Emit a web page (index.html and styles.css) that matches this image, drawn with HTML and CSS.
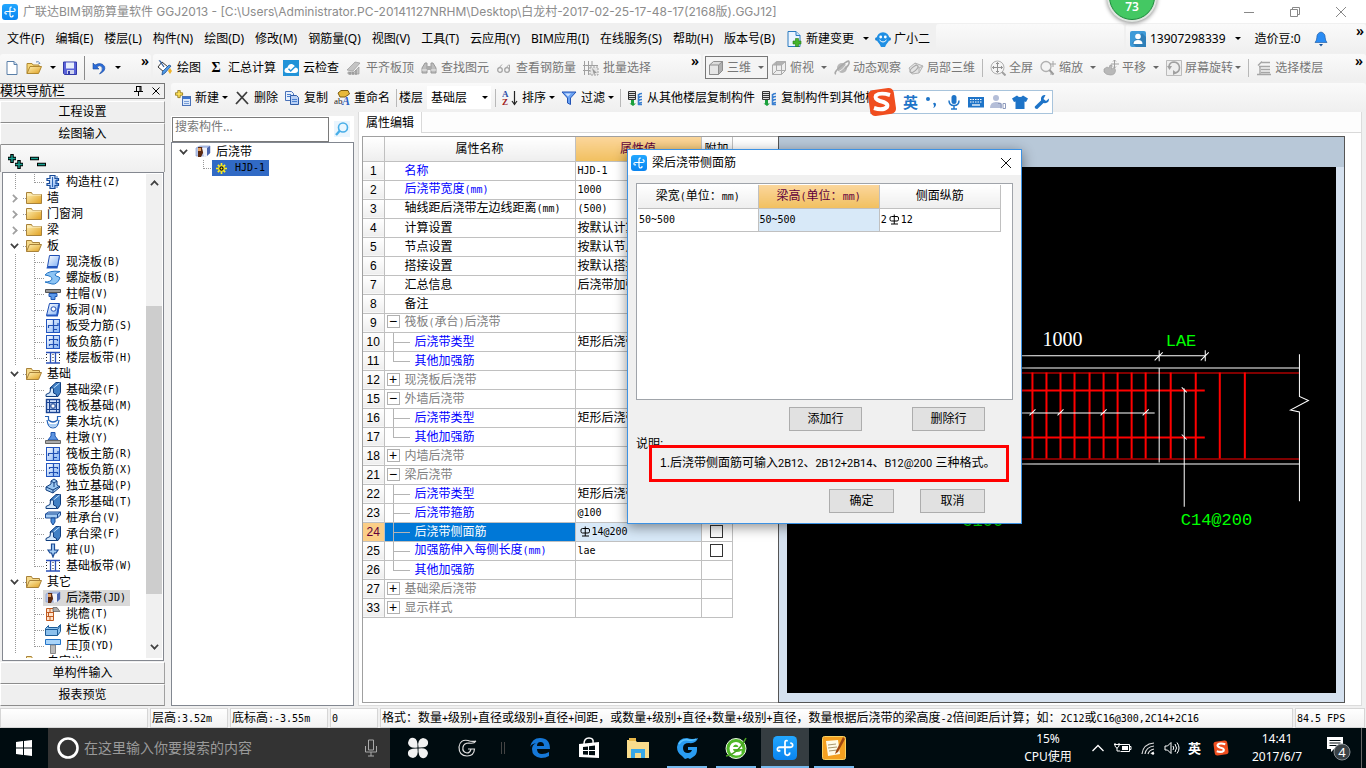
FILE: index.html
```html
<!DOCTYPE html>
<html lang="zh-CN">
<head>
<meta charset="utf-8">
<title>广联达BIM钢筋算量软件 GGJ2013</title>
<link rel="stylesheet" href="styles.css">
</head>
<body>
<svg class="sprite" aria-hidden="true">
<defs>
<linearGradient id="gFold" x1="0" y1="0" x2="1" y2="1"><stop offset="0" stop-color="#fff2b8"/><stop offset="1" stop-color="#e0a020"/></linearGradient>
<linearGradient id="gBlue" x1="0" y1="0" x2="1" y2="1"><stop offset="0" stop-color="#fff"/><stop offset="1" stop-color="#7fb0f5"/></linearGradient>
<linearGradient id="gApp" x1="0" y1="0" x2="0" y2="1"><stop offset="0" stop-color="#22a7ff"/><stop offset="1" stop-color="#0a84f0"/></linearGradient>
</defs>
<symbol id="app" viewBox="0 0 16 16"><rect width="16" height="16" rx="3" fill="url(#gApp)"/><path d="M9.800 3.200Q8 2.600 8 4.500v6.500q0 2 2 1.800 1.300-.3 1-1.800M3 9.500Q2.600 7.500 4.500 7.500h7q2 0 1.500-2M3 9.500q.8 1 1.800 0M11.500 5q.8-.6 1.500.5" fill="none" stroke="#fff" stroke-width="1.200"/></symbol>
<symbol id="doc" viewBox="0 0 16 16"><path d="M3 1.500h7l3 3v10H3z" fill="#fff" stroke="#5a7fa8"/><path d="M10 1.500v3h3" fill="#cfe0f5" stroke="#5a7fa8"/></symbol>
<symbol id="open" viewBox="0 0 16 16"><path d="M1 13.500V3.500h5l1 1.500h6v2" fill="#f7d777" stroke="#b08830"/><path d="M1 13.500l3-7h11.500l-3 7z" fill="url(#gFold)" stroke="#b08830"/><path d="M10 2q3-1.500 4 1.500l-1.500 0" fill="none" stroke="#6a8db8"/></symbol>
<symbol id="save" viewBox="0 0 16 16"><path d="M1.500 2h13v12.500h-12l-1-1z" fill="#5b63d8" stroke="#323aa8"/><rect x="4" y="2.500" width="8" height="6" fill="#e8eefb"/><rect x="5" y="10" width="7" height="4" fill="#cfd4ee"/><rect x="6" y="11" width="2" height="3" fill="#323aa8"/></symbol>
<symbol id="undo" viewBox="0 0 16 16"><path d="M2 3v6h6L5.800 6.800Q9 4.500 11 7q1.500 3-2.500 7Q15 11 13.600 6.500 10.500 1.500 4 5z" fill="#2b6bd8" stroke="#174aa0" stroke-width=".6"/></symbol>
<symbol id="paint" viewBox="0 0 16 16"><path d="M5 2l6 5-4 5-6-5z" fill="#fff" stroke="#333"/><path d="M2 1q1-1 3 3l2 3" fill="none" stroke="#345f9c" stroke-width="1.300"/><path d="M14 6l-6 7-3 2 .5-3.500L12 5z" fill="#4f9be8" stroke="#1d4f93" stroke-width=".8"/><path d="M13 8l2 3-2 3-2-3z" fill="#f0b429"/></symbol>
<symbol id="cloud" viewBox="0 0 16 16"><rect y="0" width="16" height="16" fill="#2193d8"/><path d="M4.500 13Q1 13 1.500 10 2 7.500 4.500 7.500 5.500 3.500 9 4q2.800.5 3.200 3.500 2.800 0 2.800 2.700T12 13z" fill="#fff"/><path d="M5.500 8.800l2.200 2.200L12 6.800" fill="none" stroke="#2193d8" stroke-width="1.500"/></symbol>
<symbol id="gslab" viewBox="0 0 16 16"><path d="M1 10l8-8 5 1-7 8zM2 12h6l5-5v7H2z" fill="#c4c4c4" stroke="#9a9a9a" stroke-width=".7"/><path d="M4 12v3M7 12v3M10 10v5" stroke="#888"/></symbol>
<symbol id="gbino" viewBox="0 0 16 16"><path d="M1 13V8l3-5h2v10zM15 13V8l-3-5h-2v10z" fill="#bdbdbd" stroke="#999"/><rect x="6" y="6" width="4" height="4" fill="#aaa"/><path d="M1 10h5M10 10h5" stroke="#eee"/></symbol>
<symbol id="gglass" viewBox="0 0 16 16"><circle cx="4" cy="10" r="2.300" fill="none" stroke="#a5a5a5" stroke-width="1.300"/><circle cx="11" cy="10" r="2.300" fill="none" stroke="#a5a5a5" stroke-width="1.300"/><path d="M2 9l4-4.500M9 9l4-4.500M13.500 11V5" stroke="#a5a5a5"/></symbol>
<symbol id="gbatch" viewBox="0 0 16 16"><path d="M1.500 1v14M5.500 1v14M0 5.500h15M0 10.500h8M9 1v5" stroke="#a0a0a0" fill="none"/><path d="M7 7h8v8H7z" fill="#e4e4e4" stroke="#a0a0a0" stroke-dasharray="2 1"/><path d="M9 8l5 5-2 0-1 2z" fill="#999"/></symbol>
<symbol id="gcube" viewBox="0 0 16 16"><path d="M1.500 5l4-3.500h9v9l-4 4h-9z" fill="#dcdcdc" stroke="#8e8e8e"/><path d="M10.500 5l4-3.500v9l-4 4z" fill="#b0b0b0" stroke="#8e8e8e"/><path d="M1.500 5h9v9.500h-9z" fill="#e6e6e6" stroke="#8e8e8e"/></symbol>
<symbol id="gcube2" viewBox="0 0 16 16"><path d="M1.500 5l4-3.500h9v9l-4 4h-9z" fill="#eee" stroke="#aaa"/><path d="M1.500 5l4-3.500h9L10.500 5z" fill="#b2b2b2"/><path d="M1.500 5h9v9.500M5.500 2v8.500h9M5.500 10.500l-4 4M10.500 5l4-3.500" fill="none" stroke="#aaa"/></symbol>
<symbol id="gorbit" viewBox="0 0 16 16"><circle cx="8" cy="8" r="5" fill="#b8b8b8"/><path d="M2 14Q-1 13 7 6t8-4q1 2-4 7" fill="none" stroke="#a8a8a8" stroke-width="1.600"/><path d="M4 12q5-2 8-7" stroke="#eee" fill="none"/></symbol>
<symbol id="glocal" viewBox="0 0 16 16"><path d="M1 8l6-5 8 3-4 7-7 1z" fill="#e4e4e4" stroke="#b4b4b4"/><ellipse cx="6" cy="9" rx="2" ry="5" transform="rotate(50 6 9)" fill="none" stroke="#a4a4a4"/><path d="M7 3l4 5v5M11 8l4-2" stroke="#b4b4b4" fill="none"/></symbol>
<symbol id="gfull" viewBox="0 0 16 16"><circle cx="7.500" cy="7.500" r="6.500" fill="#f4f4f4" stroke="#b0b0b0"/><path d="M7.500 2.500v10M2.500 7.500h10M6 4l1.500-1.500L9 4M6 11l1.500 1.500L9 11M4 6L2.500 7.500 4 9M11 6l1.500 1.500L11 9" stroke="#909090" fill="none"/><path d="M12 12l3.500 3.500" stroke="#a0a0a0" stroke-width="2"/></symbol>
<symbol id="gzoom" viewBox="0 0 16 16"><circle cx="6" cy="6.500" r="5" fill="#f4f4f4" stroke="#b0b0b0" stroke-width="1.300"/><path d="M9.500 10l4 4.500" stroke="#9a9a9a" stroke-width="2"/><path d="M13 1v6M10 4h6M10 14h4" stroke="#a6a6a6"/></symbol>
<symbol id="ghand" viewBox="0 0 16 16"><path d="M1 9l3-2 2 1 1-3h2l-.5 4 3-1 1 2q0 5-5 5Q3 15 1 12z" fill="#b8b8b8" stroke="#999" stroke-width=".6"/><path d="M11.500 0v8M8 4h8M10 1.500L11.500 0 13 1.500M10 6.500L11.500 8 13 6.500" stroke="#a0a0a0" fill="none"/></symbol>
<symbol id="grot" viewBox="0 0 16 16"><path d="M.5.5h15v15H.5z" fill="#eee" stroke="#bbb"/><path d="M3 6q1-4 5-4 5 .5 5.500 5.500Q13.500 12 9 13" fill="none" stroke="#a0a0a0" stroke-width="1.600"/><path d="M1 6h5l-2.500 4zM7 10v5l4-2" fill="#a0a0a0"/></symbol>
<symbol id="gfloor" viewBox="0 0 16 16"><path d="M2 5.500L6 1.500M5 2.500h9M3 6.500h11M5 9.500h9M5 12.500h9M1 14.500h14M4 6v8" fill="none" stroke="#a6a6a6" stroke-width="1.400"/></symbol>
<symbol id="new" viewBox="0 0 16 16"><path d="M3.500.5h3v3h3v3h-3v3h-3v-3h-3v-3h3z" fill="#ffe25a" stroke="#8a7010" transform="scale(.8)"/><rect x="7.500" y="6.500" width="8" height="9" fill="#dbe8fa" stroke="#4a72b8"/><path d="M8 8h7" stroke="#3c74d0" stroke-width="2"/><path d="M9 11.500h5M9 13.500h5" stroke="#7a9fd8"/></symbol>
<symbol id="del" viewBox="0 0 16 16"><path d="M3 2l11 12M13 2L2 14" stroke="#3c3c3c" stroke-width="1.800"/></symbol>
<symbol id="copy" viewBox="0 0 16 16"><path d="M1.500 1.500h6l2 2v7h-8z" fill="#e6effc" stroke="#4a72b8"/><path d="M6.500 5.500h6l2 2v7h-8z" fill="#b9d0f4" stroke="#2f5ca8"/><path d="M3 4.500h4M3 6.500h3M8 9.500h5M8 11.500h5" stroke="#4a80d0"/></symbol>
<symbol id="ren" viewBox="0 0 16 16"><path d="M4 3l3-2.500h7L15.500 4 11 7H6z" fill="#e8b93a" stroke="#7c5c10"/><text x="0" y="14" font-size="9" font-family="Liberation Serif" fill="#222">ab</text><text x="8" y="15" font-size="12" font-style="italic" font-weight="bold" font-family="Liberation Serif" fill="#2c5fc0">A</text></symbol>
<symbol id="sort" viewBox="0 0 16 16"><text x="0" y="7" font-size="9" font-weight="bold" font-family="Liberation Serif" fill="#2c4fa8">A</text><text x="0" y="15" font-size="9" font-weight="bold" font-family="Liberation Serif" fill="#a02020">Z</text><path d="M12.500 1v13M10 11l2.500 3.500L15 11" fill="none" stroke="#222" stroke-width="1.200"/></symbol>
<symbol id="filter" viewBox="0 0 16 16"><path d="M1 2h14L9.500 8v6.500l-3-1.500V8z" fill="#6aa2f4" stroke="#2353b4"/><path d="M4 3.500h6l-3 3z" fill="#cfe2ff"/></symbol>
<symbol id="fcopy" viewBox="0 0 16 16"><path d="M1.500 1.500h7v8h-7z" fill="#ddd" stroke="#333"/><path d="M2 3.500h6M2 5.500h6M2 7.500h6M8.500 2v7" stroke="#333"/><path d="M15 3.500q-3 0-3 1.500M15 6.500q-3 0-3 1.500M15 9.500q-3 0-3 1.500M15 12.500q-3 0-3 2h3M11.500 4v11" fill="none" stroke="#3a7fd0" stroke-width="1.600"/><path d="M4 10v3.500H2.500L6 16l3-2.500H7V10z" fill="#1ba03c"/></symbol>
<symbol id="chg" viewBox="0 0 16 16"><path d="M2 .5h8l4 4v11H2z" fill="#eaf4ff" stroke="#2a7ac0"/><path d="M10 .5v4h4" fill="#cbe2f8" stroke="#2a7ac0"/><path d="M9.500 7.500h3v2.500H15v3h-2.500v2.500h-3V13H7v-3h2.500z" fill="#45b52c" stroke="#257816" stroke-width=".6"/></symbol>
<symbol id="robot" viewBox="0 0 16 16"><circle cx="1.800" cy="8" r="1.800" fill="#1b7fd0"/><circle cx="14.200" cy="8" r="1.800" fill="#1b7fd0"/><circle cx="8" cy="7.500" r="6.300" fill="#1f8fe4"/><path d="M4 12h8l-2 4H6z" fill="#1f8fe4"/><circle cx="5.700" cy="6" r="1.400" fill="#fff"/><circle cx="10.300" cy="6" r="1.400" fill="#fff"/><path d="M4.500 9q3.500 4 7 0" stroke="#fff" fill="none"/></symbol>
<symbol id="user" viewBox="0 0 16 16"><rect width="16" height="16" rx="2" fill="#3f9bd8"/><path d="M2 12L12 2l4 4v10H6z" fill="#2f7fb8"/><circle cx="8" cy="5.500" r="2.800" fill="#fff"/><path d="M3.500 13q0-4 4.500-4t4.500 4z" fill="#fff"/></symbol>
<symbol id="bell" viewBox="0 0 16 16"><path d="M8 1q4.200 1 4.200 5.500 0 3 1.800 5H2q1.800-2 1.800-5Q3.800 2 8 1z" fill="#2a8cf4" stroke="#14529c" stroke-width=".6"/><path d="M6 13h4l-2 2.500z" fill="#14529c"/></symbol>
<symbol id="mag" viewBox="0 0 16 16"><rect width="16" height="16" fill="#eaf5fd"/><circle cx="9" cy="6.500" r="4.500" fill="#e8f6ff" stroke="#48aee8" stroke-width="1.600"/><path d="M5.800 9.800L2 14" stroke="#48aee8" stroke-width="2.400"/></symbol>
<symbol id="dir" viewBox="0 0 16 16"><path d="M.5 13.500v-11h5l1 2h9v9z" fill="url(#gFold)" stroke="#a8823a"/><path d="M1 5h14" stroke="#fff4cc"/></symbol>
<symbol id="dirO" viewBox="0 0 16 16"><path d="M.5 13.500v-11h5l1 2h7v2" fill="#f5d98a" stroke="#a8823a"/><path d="M.5 13.500l3-7h12l-3 7z" fill="url(#gFold)" stroke="#a8823a"/></symbol>
<symbol id="t-hjd" viewBox="0 0 16 16"><path d="M1 4l4-2h10v7l-4 3H1z" fill="#b8c8ec" stroke="#7a90c8" stroke-width=".6"/><path d="M3 3h4l2 4-3 6H3z" fill="#5c2a12"/><path d="M7 4h5v8l-3 1-1-5z" fill="#f0f2fa"/><path d="M12 4l3-2v7l-3 3z" fill="#4a66b0"/><path d="M3 4h3v3H3z" fill="#e6a060"/></symbol>
<symbol id="gear" viewBox="0 0 12 12"><path d="M6 0v12M0 6h12M2 2l8 8M10 2l-8 8" stroke="#ffee20" stroke-width="1.800"/><circle cx="6" cy="6" r="3" fill="#111" stroke="#ffee20" stroke-width="1.200"/><circle cx="6" cy="6" r="1" fill="#ffee20"/></symbol>
<symbol id="t-gz" viewBox="0 0 16 16"><path d="M5 1.500h5v3h3.500v2H11v3h2.500v2H10v3H5v-3H2v-2h2.500v-3H2v-2h3z" fill="url(#gBlue)" stroke="#174a98" stroke-width="1.200"/><path d="M12 2v12M7.500 3v10" stroke="#2b66b8"/></symbol>
<symbol id="t-slab" viewBox="0 0 16 16"><path d="M4.500 1.500h10l-2 11h-10z" fill="url(#gBlue)" stroke="#1f4fb4"/><path d="M2 12.500h10.500l2-11v3l-2 10H1.500z" fill="#2356c0"/></symbol>
<symbol id="t-spiral" viewBox="0 0 16 16"><path d="M0 5Q4 0 15 1.500 8 4 11 6q4 1 4 2-3 7-8 6L0 12q6 0 7-3Q7 6 0 5z" fill="#8cc4f4" stroke="#2474c4"/></symbol>
<symbol id="t-cap" viewBox="0 0 16 16"><path d="M.5 3.500h15v3H.5z" fill="#999" stroke="#555"/><path d="M4 7.500h8v3h-2v3H6v-3H4z" fill="#5c9aec" stroke="#1f56b0"/></symbol>
<symbol id="t-hole" viewBox="0 0 16 16"><path d="M4.500 1.500h10l-2 12h-11z" fill="url(#gBlue)" stroke="#1f4fb4"/><ellipse cx="8.500" cy="7" rx="2.500" ry="2.200" fill="#fff" stroke="#1f4fb4"/><path d="M1.500 13.500H12l2-11" fill="none" stroke="#2356c0" stroke-width="1.800"/></symbol>
<symbol id="t-rs" viewBox="0 0 16 16"><rect x="1.500" y="1.500" width="13" height="13" fill="url(#gBlue)" stroke="#2356c0"/><path d="M8.500 2v12M3.500 7v3M3.500 7.500H13V5M8.500 11.500H12" fill="none" stroke="#1f4fb4" stroke-width="1.200"/></symbol>
<symbol id="t-rf" viewBox="0 0 16 16"><rect x="1.500" y="1.500" width="13" height="13" fill="url(#gBlue)" stroke="#2356c0"/><path d="M8.500 2v12M4 5.500h9M4 10.500h9M4.500 5v2M12.500 5v2M4.500 10v2M12.500 10v2" fill="none" stroke="#1f4fb4" stroke-width="1.200"/></symbol>
<symbol id="t-strip" viewBox="0 0 16 16"><path d="M1 2.500h14M1 13h14M5.500 3v10M10.500 3v10" stroke="#2a50b8" stroke-width="1.300"/><path d="M1.500 4v8M8 4v8M14.500 4v8" stroke="#222" stroke-dasharray="1 2"/></symbol>
<symbol id="t-beam" viewBox="0 0 16 16"><path d="M5 6l6-5.500h4.500v10L13 14.500H9z" fill="#3f7fc4" stroke="#0f3c7c"/><path d="M5.500 6h3v5l3 1.500v2H1v-2l4-2z" fill="#d4e8fc" stroke="#0f3c7c"/><path d="M8.500 6l6-5" stroke="#bfe0ff"/></symbol>
<symbol id="t-raft" viewBox="0 0 16 16"><rect x="1.500" y="1.500" width="13" height="13" fill="#cfe0fa" stroke="#1a4494" stroke-width="1.400"/><path d="M4.500 1v14M11.500 1v14M1 4.500h14M1 11.500h14M8 4v8M4 8h8" stroke="#1a4494"/><rect x="6" y="6" width="4" height="4" fill="#fff" stroke="#1a4494"/></symbol>
<symbol id="t-pit" viewBox="0 0 16 16"><path d="M0 2.500h3.500V6q4.500 4 9 0V2.500H16M2 6q1 8 6 8t6-8" fill="none" stroke="#2563b8" stroke-width="1.200"/><path d="M3 8q1 5 5 5t5-5l-2 2H5z" fill="#a8cdf4"/></symbol>
<symbol id="t-pier" viewBox="0 0 16 16"><path d="M6 2.500h4V6l3 4H3l3-4z" fill="#5c94e0" stroke="#1f56b0"/><path d="M.5 10.500h15v3H.5z" fill="#aaa" stroke="#666"/></symbol>
<symbol id="t-iso" viewBox="0 0 16 16"><path d="M1 9l5-3V3l3-2 3 2v4l3 2-7 6-7-3z" fill="#9cc8f0" stroke="#123f80"/><path d="M6 3l3 2 3-2M9 5v4M1 9l7 3 7-4M8 12v3" fill="none" stroke="#123f80"/></symbol>
<symbol id="t-pc" viewBox="0 0 16 16"><path d="M.5 4l3-2h12v3l-3 3H.5z" fill="#a4ccf4" stroke="#1a4a94"/><path d="M.5 4h12v4M12.500 4l3-2" fill="none" stroke="#1a4a94"/><path d="M6 8h4v4l-2 3-2-3z" fill="#4a8edc" stroke="#1a4a94"/></symbol>
<symbol id="t-pile" viewBox="0 0 16 16"><path d="M6.500 2h3v6H13l-2 3H9.500L8 15l-1.500-4H5L3 8h3.500z" fill="#a4ccf4" stroke="#1a4a94" stroke-width="1.200"/></symbol>
<symbol id="t-brick" viewBox="0 0 16 16"><path d="M1.500 2.500h7v12h-7z" fill="#ffe4cc" stroke="#c05a20"/><path d="M1.500 6.500h7M1.500 10.500h7M5 2.500v4M3.500 6.500v4M5 10.500v4" stroke="#c05a20"/><path d="M8 1.500h4l3 4H8z" fill="#aaa" stroke="#444" stroke-width=".6"/></symbol>
<symbol id="t-rail" viewBox="0 0 16 16"><path d="M.5 6.500l3-3v2h9l3-3v7l-3 4H.5z" fill="#8cc0ec" stroke="#1d5c98"/><path d="M.5 7.500h12l3-4M12.500 7.500v6" fill="none" stroke="#1d5c98"/></symbol>
<symbol id="t-top" viewBox="0 0 16 16"><path d="M.5 1.500h15v5H.5z" fill="#a8d4fa" stroke="#2474c8"/><path d="M5.500 7h5v8.500h-5z" fill="#bbb" stroke="#888"/></symbol>
<symbol id="rebar" viewBox="0 0 12 12"><rect x="2" y="3.500" width="8.500" height="4.500" rx="1.500" fill="none" stroke="#000"/><path d="M6.250 1.500v9.500M3 11h7" fill="none" stroke="#000"/></symbol>
<symbol id="sogou" viewBox="0 0 30 30"><rect x="2" y="2" width="26" height="26" rx="5" fill="#f04e1f" transform="rotate(-8 15 15)"/><path d="M23 8Q13 5 9 8.500q-2 3.500 4 5.500 9 2 7 6-4 4-13 1" fill="none" stroke="#fff" stroke-width="4"/></symbol>
</svg>

<header class="titlebar">
<svg class="i"><use href="#app"/></svg>
<h1>广联达BIM钢筋算量软件 GGJ2013 - [C:\Users\Administrator.PC-20141127NRHM\Desktop\白龙村-2017-02-25-17-48-17(2168版).GGJ12]</h1>
<div class="winbtns">
<button aria-label="最小化"><svg viewBox="0 0 12 12"><path d="M1 6.500h10"/></svg></button>
<button aria-label="还原"><svg viewBox="0 0 12 12"><path d="M1.500 3.500h7v7h-7zM3.500 3.500v-2h7v7h-2"/></svg></button>
<button aria-label="关闭"><svg viewBox="0 0 12 12"><path d="M1 1l10 10M11 1L1 11"/></svg></button>
</div>
</header>
<div class="ball">73</div>

<nav class="menubar">
<div class="menus">
<button>文件(F)</button><button>编辑(E)</button><button>楼层(L)</button><button>构件(N)</button><button>绘图(D)</button><button>修改(M)</button><button>钢筋量(Q)</button><button>视图(V)</button><button>工具(T)</button><button>云应用(Y)</button><button>BIM应用(I)</button><button>在线服务(S)</button><button>帮助(H)</button><button>版本号(B)</button>
<button class="tb"><svg class="i"><use href="#chg"/></svg>新建变更<span class="caret wide"></span></button>
<button class="tb close"><svg class="i"><use href="#robot"/></svg>广小二</button>
</div>
<div class="strip grow"></div>
<div class="strip account">
<button class="tb"><svg class="i"><use href="#user"/></svg>13907298339<span class="caret wide"></span></button>
<button>造价豆:0</button>
<button aria-label="消息"><svg class="i"><use href="#bell"/></svg></button>
<span class="more">»</span>
</div>
</nav>

<div class="toolbar">
<div class="strip g1">
<button aria-label="新建工程"><svg class="i"><use href="#doc"/></svg></button>
<button class="tb" aria-label="打开"><svg class="i"><use href="#open"/></svg><span class="caret"></span></button>
<button aria-label="保存"><svg class="i"><use href="#save"/></svg></button>
<span class="sep dark"></span>
<button class="tb" aria-label="撤销"><svg class="i"><use href="#undo"/></svg><span class="caret"></span></button>
<span class="more">»</span>
</div>
<div class="strip g2">
<button class="tb"><svg class="i"><use href="#paint"/></svg>绘图</button>
<button class="tb"><span class="sigma">Σ</span>汇总计算</button>
<button class="tb"><svg class="i"><use href="#cloud"/></svg>云检查</button>
<button class="tb off"><svg class="i"><use href="#gslab"/></svg>平齐板顶</button>
<button class="tb off"><svg class="i"><use href="#gbino"/></svg>查找图元</button>
<button class="tb off"><svg class="i"><use href="#gglass"/></svg>查看钢筋量</button>
<button class="tb off"><svg class="i"><use href="#gbatch"/></svg>批量选择</button>
<span class="more">»</span>
</div>
<div class="strip g3">
<button class="tb off boxed"><svg class="i"><use href="#gcube"/></svg>三维<span class="caret"></span></button>
<button class="tb off"><svg class="i"><use href="#gcube2"/></svg>俯视<span class="caret"></span></button>
<button class="tb off"><svg class="i"><use href="#gorbit"/></svg>动态观察</button>
<button class="tb off"><svg class="i"><use href="#glocal"/></svg>局部三维</button>
<span class="sep"></span>
<button class="tb off"><svg class="i"><use href="#gfull"/></svg>全屏</button>
<button class="tb off"><svg class="i"><use href="#gzoom"/></svg>缩放<span class="caret"></span></button>
<button class="tb off"><svg class="i"><use href="#ghand"/></svg>平移<span class="caret"></span></button>
<button class="tb off"><svg class="i"><use href="#grot"/></svg>屏幕旋转<span class="caret tight"></span></button>
<span class="sep"></span>
<button class="tb off"><svg class="i"><use href="#gfloor"/></svg>选择楼层</button>
<span class="more">»</span>
</div>
</div>

<main class="main">
<aside class="nav sim">
<div class="navhead"><span>模块导航栏</span>
<button aria-label="固定"><svg viewBox="0 0 12 12"><path d="M4 1.500h5M4.500 1v5M8 1v5M9 1v5M2 6.500h9M6.500 7v4"/></svg></button>
<button aria-label="关闭面板"><svg viewBox="0 0 12 12"><path d="M2.500 2.500l7 7M9.500 2.500l-7 7"/></svg></button></div>
<button class="navbtn">工程设置</button>
<button class="navbtn">绘图输入</button>
<div class="navtools">
<button aria-label="全部展开"><svg viewBox="0 0 18 16"><path d="M5 1v9M1 5.500h8M12 7v9M8 11.500h8" stroke="#000" stroke-width="3.500"/><path d="M5 2v7M1.500 5.500h7M12 8v7M8.500 11.500h7" stroke="#18a090" stroke-width="1.400"/></svg></button>
<button aria-label="全部折叠"><svg viewBox="0 0 18 16"><path d="M1 5.500h9M8 11.500h9" stroke="#000" stroke-width="3.500"/><path d="M2 5.500h7M9 11.500h7" stroke="#18a090" stroke-width="1.400"/></svg></button>
</div>
<div class="treebox">
<ul class="tree">
<li class="leaf last"><span><svg class="i"><use href="#t-gz"/></svg>构造柱<b>(Z)</b></span></li>
<li class="dir"><i class="shut"></i><svg class="i"><use href="#dir"/></svg>墙</li>
<li class="dir"><i class="shut"></i><svg class="i"><use href="#dir"/></svg>门窗洞</li>
<li class="dir"><i class="shut"></i><svg class="i"><use href="#dir"/></svg>梁</li>
<li class="dir"><i></i><svg class="i"><use href="#dirO"/></svg>板</li>
<li class="leaf"><span><svg class="i"><use href="#t-slab"/></svg>现浇板<b>(B)</b></span></li>
<li class="leaf"><span><svg class="i"><use href="#t-spiral"/></svg>螺旋板<b>(B)</b></span></li>
<li class="leaf"><span><svg class="i"><use href="#t-cap"/></svg>柱帽<b>(V)</b></span></li>
<li class="leaf"><span><svg class="i"><use href="#t-hole"/></svg>板洞<b>(N)</b></span></li>
<li class="leaf"><span><svg class="i"><use href="#t-rs"/></svg>板受力筋<b>(S)</b></span></li>
<li class="leaf"><span><svg class="i"><use href="#t-rf"/></svg>板负筋<b>(F)</b></span></li>
<li class="leaf last"><span><svg class="i"><use href="#t-strip"/></svg>楼层板带<b>(H)</b></span></li>
<li class="dir"><i></i><svg class="i"><use href="#dirO"/></svg>基础</li>
<li class="leaf"><span><svg class="i"><use href="#t-beam"/></svg>基础梁<b>(F)</b></span></li>
<li class="leaf"><span><svg class="i"><use href="#t-raft"/></svg>筏板基础<b>(M)</b></span></li>
<li class="leaf"><span><svg class="i"><use href="#t-pit"/></svg>集水坑<b>(K)</b></span></li>
<li class="leaf"><span><svg class="i"><use href="#t-pier"/></svg>柱墩<b>(Y)</b></span></li>
<li class="leaf"><span><svg class="i"><use href="#t-rs"/></svg>筏板主筋<b>(R)</b></span></li>
<li class="leaf"><span><svg class="i"><use href="#t-rf"/></svg>筏板负筋<b>(X)</b></span></li>
<li class="leaf"><span><svg class="i"><use href="#t-iso"/></svg>独立基础<b>(P)</b></span></li>
<li class="leaf"><span><svg class="i"><use href="#t-beam"/></svg>条形基础<b>(T)</b></span></li>
<li class="leaf"><span><svg class="i"><use href="#t-pc"/></svg>桩承台<b>(V)</b></span></li>
<li class="leaf"><span><svg class="i"><use href="#t-beam"/></svg>承台梁<b>(F)</b></span></li>
<li class="leaf"><span><svg class="i"><use href="#t-pile"/></svg>桩<b>(U)</b></span></li>
<li class="leaf last"><span><svg class="i"><use href="#t-strip"/></svg>基础板带<b>(W)</b></span></li>
<li class="dir"><i></i><svg class="i"><use href="#dirO"/></svg>其它</li>
<li class="leaf"><span class="sel"><svg class="i"><use href="#t-hjd"/></svg>后浇带<b>(JD)</b></span></li>
<li class="leaf"><span><svg class="i"><use href="#t-brick"/></svg>挑檐<b>(T)</b></span></li>
<li class="leaf"><span><svg class="i"><use href="#t-rail"/></svg>栏板<b>(K)</b></span></li>
<li class="leaf last"><span><svg class="i"><use href="#t-top"/></svg>压顶<b>(YD)</b></span></li>
<li class="dir"><i class="shut"></i><svg class="i"><use href="#dir"/></svg>自定义</li>
</ul>
<div class="vscroll"><i class="up"></i><div class="track"><div class="thumb"></div></div><i></i></div>
</div>
<button class="navbtn">单构件输入</button>
<button class="navbtn">报表预览</button>
</aside>

<section class="work">
<div class="strip edit">
<button class="tb"><svg class="i"><use href="#new"/></svg>新建<span class="caret tight"></span></button>
<button class="tb"><svg class="i"><use href="#del"/></svg>删除</button>
<button class="tb"><svg class="i"><use href="#copy"/></svg>复制</button>
<button class="tb"><svg class="i"><use href="#ren"/></svg>重命名</button>
<span class="sep"></span>
<label for="floor">楼层</label>
<span class="pick"><select id="floor"><option>基础层</option></select><span class="caret"></span></span>
<span class="sep"></span>
<button class="tb"><svg class="i"><use href="#sort"/></svg>排序<span class="caret tight"></span></button>
<button class="tb"><svg class="i"><use href="#filter"/></svg>过滤<span class="caret tight"></span></button>
<span class="sep"></span>
<button class="tb"><svg class="i"><use href="#fcopy"/></svg>从其他楼层复制构件</button>
<button class="tb"><svg class="i"><use href="#fcopy"/></svg>复制构件到其他楼层</button>
</div>
<div class="panes">
<section class="comps">
<div class="search"><input type="text" aria-label="搜索构件" placeholder="搜索构件..."><button aria-label="搜索"><svg class="i"><use href="#mag"/></svg></button></div>
<ul class="comptree sim">
<li class="croot"><i></i><svg class="i"><use href="#t-hjd"/></svg>后浇带</li>
<li class="cleaf"><span><svg class="g"><use href="#gear"/></svg><b>HJD-1</b></span></li>
</ul>
</section>
<section class="props sim">
<div class="tabs"><button>属性编辑</button></div>
<div class="sheet">
<div class="gridbox">
<table class="grid">
<colgroup><col class="c1"><col class="c2"><col class="c3"><col class="c4"></colgroup>
<thead><tr><th></th><th>属性名称</th><th class="hot">属性值</th><th>附加</th></tr></thead>
<tbody>
<tr><th>1</th><td class="n blue">名称</td><td><b>HJD-1</b></td><td></td></tr>
<tr><th>2</th><td class="n blue">后浇带宽度<b>(mm)</b></td><td><b>1000</b></td><td></td></tr>
<tr><th>3</th><td class="n">轴线距后浇带左边线距离<b>(mm)</b></td><td><b>(500)</b></td><td></td></tr>
<tr><th>4</th><td class="n">计算设置</td><td>按默认计算设置计算</td><td></td></tr>
<tr><th>5</th><td class="n">节点设置</td><td>按默认节点设置计算</td><td></td></tr>
<tr><th>6</th><td class="n">搭接设置</td><td>按默认搭接设置计算</td><td></td></tr>
<tr><th>7</th><td class="n">汇总信息</td><td>后浇带加强筋</td><td></td></tr>
<tr><th>8</th><td class="n">备注</td><td></td><td></td></tr>
<tr><th>9</th><td class="p"><button aria-label="折叠">−</button>筏板<b>(</b>承台<b>)</b>后浇带</td><td></td><td></td></tr>
<tr><th>10</th><td class="k">后浇带类型</td><td>矩形后浇带</td><td></td></tr>
<tr><th>11</th><td class="k end">其他加强筋</td><td></td><td></td></tr>
<tr><th>12</th><td class="p"><button aria-label="展开">+</button>现浇板后浇带</td><td></td><td></td></tr>
<tr><th>15</th><td class="p"><button aria-label="折叠">−</button>外墙后浇带</td><td></td><td></td></tr>
<tr><th>16</th><td class="k">后浇带类型</td><td>矩形后浇带</td><td></td></tr>
<tr><th>17</th><td class="k end">其他加强筋</td><td></td><td></td></tr>
<tr><th>18</th><td class="p"><button aria-label="展开">+</button>内墙后浇带</td><td></td><td></td></tr>
<tr><th>21</th><td class="p"><button aria-label="折叠">−</button>梁后浇带</td><td></td><td></td></tr>
<tr><th>22</th><td class="k">后浇带类型</td><td>矩形后浇带</td><td></td></tr>
<tr><th>23</th><td class="k">后浇带箍筋</td><td><b>@100</b></td><td></td></tr>
<tr class="cur"><th>24</th><td class="k">后浇带侧面筋</td><td><svg class="r"><use href="#rebar"/></svg><b>14@200</b></td><td class="chk"><input type="checkbox" aria-label="附加 后浇带侧面筋"></td></tr>
<tr><th>25</th><td class="k">加强筋伸入每侧长度<b>(mm)</b></td><td><b>lae</b></td><td class="chk"><input type="checkbox" aria-label="附加 加强筋伸入每侧长度"></td></tr>
<tr><th>26</th><td class="k end">其他加强筋</td><td></td><td></td></tr>
<tr><th>27</th><td class="p"><button aria-label="展开">+</button>基础梁后浇带</td><td></td><td></td></tr>
<tr><th>33</th><td class="p"><button aria-label="展开">+</button>显示样式</td><td></td><td></td></tr>
</tbody>
</table>
</div>
<div class="view">
<svg viewBox="787 168 548 525" preserveAspectRatio="none" role="img" aria-label="梁后浇带节点图">
<rect x="787" y="168" width="549" height="525" fill="#000"/>
<g fill="none" stroke="#f00">
<path d="M880 373.500h418M880 459.500h418"/>
<path stroke-width="2" d="M880 391h324M880 438h324M1032 373v86M1046 373v86M1060 373v86M1074 373v86M1089 373v86M1103 373v86M1117 373v86M1131 373v86M1145 373v86M1170 373v86M1195 373v86M1219 373v86M1244 373v86"/>
</g>
<path fill="none" stroke="#fff" d="M880 356.500h325M880 368.500h418M880 464.500h418M880 413.500h274M1158.500 368v95M1158.500 351v11M1204.500 351v11M1154 361l8-8M1200 361l8-8M1029 416l6-6M1057 416l6-6M1100 416l6-6M1142 416l6-6M1183.500 389v118M1181 388l5 5M1181 435l5 5M1298.500 355v42l9 4-18 9.500 9 2v89"/>
<text x="1042" y="347" font-family="Liberation Serif" font-size="20" fill="#fff">1000</text>
<g font-family="Liberation Mono" font-size="17" fill="#0f0"><text x="1165" y="347">LAE</text><text x="1180" y="525">C14@200</text><text x="962" y="526">C100</text></g>
</svg>
</div>
</div>
</section>
</div>
</section>
</main>

<footer class="status sim">
<span class="s1"></span><span class="s2">层高<b>:3.52m</b></span><span class="s3">底标高<b>:-3.55m</b></span><span class="s4"><b>0</b></span>
<span class="s5">格式：数量<b>+</b>级别<b>+</b>直径或级别<b>+</b>直径<b>+</b>间距，或数量<b>+</b>级别<b>+</b>直径<b>+</b>数量<b>+</b>级别<b>+</b>直径，数量根据后浇带的梁高度<b>-2</b>倍间距后计算；如：<b>2C12</b>或<b>C16@300,2C14+2C16</b></span>
<span class="s6"><b>84.5 FPS</b></span>
</footer>

<div class="taskbar">
<button class="start" aria-label="开始"><svg viewBox="0 0 16 16"><path d="M0 2l7-1v6.500H0zM8 .9L16 0v7.500H8zM0 8.500h7V15l-7-1zM8 8.500h8V16l-8-1z" fill="#fff"/></svg></button>
<div class="find"><svg viewBox="0 0 24 24"><circle cx="12" cy="12" r="9.500" fill="none" stroke="#fff" stroke-width="2.600"/></svg><input type="text" aria-label="搜索" placeholder="在这里输入你要搜索的内容"><svg class="mic" viewBox="0 0 16 20"><path d="M5.500 2h5v10h-5zM2.500 8v6h11V8M8 14v4M5 18h6" fill="none" stroke="#aaa"/></svg></div>
<div class="apps">
<button aria-label="浏览器"><svg viewBox="0 0 24 24"><g fill="#f2f2f2"><path d="M11.500 11.500Q3 13 2 7 3 1 8 2q4 1 3.500 9.500z"/><path d="M12.500 11.500Q11 3 17 2q6 1 5 6-1 4-9.500 3.500z"/><path d="M12.500 12.500Q21 11 22 17q-1 6-6 5-4-1-3.500-9.500z"/><path d="M11.500 12.500Q13 21 7 22q-6-1-5-6 1-4 9.500-3.500z"/></g></svg></button>
<button aria-label="广联达"><svg viewBox="0 0 24 24"><path d="M21 5q-4 1-8-.5Q5 3 4 11q0 9 8 9 7 0 7.500-7H13m3 0q-1 4-4 4-5-1-4-6 1-4 6-4 5 1 7-2" fill="none" stroke="#ddd" stroke-width="1.200"/></svg></button>
<span class="grip"></span>
<button aria-label="Edge"><svg viewBox="0 0 24 24"><path d="M2 11Q4 2 12 2q10 0 10 11H9q0 5 5 5 4 0 7-2v4q-3 2-8 2-9-1-9-9 0-4 4-6-5 1-6 4zm7-1h7q0-4-3.500-4T9 10z" fill="#1578d8"/></svg></button>
<button aria-label="应用商店"><svg viewBox="0 0 24 24"><path d="M2 8l20-2v16L2 21z" fill="#fff"/><path d="M7 8q0-6 5-6t4 5" fill="none" stroke="#fff" stroke-width="1.500"/><path d="M6 11l5-.6V14H6zM12 10.300l6-.7V14h-6zM6 15h5v3.800L6 18.500zM12 15h6v4.300l-6-.4z" fill="#000c10"/></svg></button>
<button aria-label="文件资源管理器"><svg viewBox="0 0 24 24"><path d="M1 4h8l2 2h12v16H1z" fill="#f8dc8c"/><path d="M3 2h7v3H3z" fill="#e8b84a"/><path d="M5 22v-9h14v9h-4v-5H9v5z" fill="#38a8e8"/></svg></button>
<button class="run" aria-label="广联达加密锁"><svg viewBox="0 0 24 24"><path d="M23 2q-2 6-9 5-6 0-6 5 0 5 5 5 3 0 4-3h5q0 5-4 7l-3 2-2-1-3 1-3-3q-5-3-5-9Q3 2 12 2q3 1 5 1 4 0 6-1z" fill="#2a9cf0"/><path d="M4 8q3-5 9-4 5 1 8-1" fill="none" stroke="#5cc4ff" stroke-width="1.500"/><path d="M13 12.500h9" stroke="#2a9cf0" stroke-width="3"/></svg></button>
<button class="run" aria-label="360浏览器"><svg viewBox="0 0 24 24"><circle cx="12" cy="12.500" r="10" fill="#50b828" stroke="#e8f8e0"/><path d="M5.500 12q1-6 6.500-6t6.500 7H9q.5 3 3.500 3 3 0 5-1.500V18q-3 2-6 1.500-6-1-6-7.500zM9 11h5.500q-.5-2.500-2.700-2.500T9 11z" fill="#fff"/><path d="M2 20Q14 18 22 2" fill="none" stroke="#48a020" stroke-width="1.500"/></svg></button>
<button class="run act" aria-label="GGJ2013"><svg viewBox="0 0 24 24"><use href="#app"/></svg></button>
<button class="run" aria-label="画图"><svg viewBox="0 0 24 24"><rect x=".5" y=".5" width="23" height="23" rx="2" fill="#f4a020" stroke="#f8d060"/><path d="M4 5l12-1 2 14-12 2z" fill="#fffbe8"/><path d="M6 9l8-1M6 12l9-1M7 15l8-1" stroke="#a89870"/><path d="M21 1l-7 14-1 3 3-2 7-13z" fill="#a04810"/></svg></button>
</div>
<div class="tray">
<div class="two cpu">15%<br>CPU使用</div>
<svg viewBox="0 0 16 16"><path d="M2.500 11L8 5.500l5.500 5.500" fill="none" stroke="#fff" stroke-width="1.300"/></svg>
<svg class="bat" viewBox="0 0 18 16"><path d="M5.500 4.500h10v7h-9M16 6.500h1v3h-1M1 3v3q1 2 2 2t2-2V3M0 4.500h6M3 8v3h3" fill="none" stroke="#fff"/><path d="M8 6h6v4H8z" fill="#fff"/></svg>
<svg viewBox="0 0 16 16"><path d="M2 14Q3 4 14 3M5 14Q6 7 14 6M8 14q1-4 6-5M11 14q.5-1.500 3-2" fill="none" stroke="#ddd" stroke-width="1.200"/><circle cx="13" cy="13.500" r="1.200" fill="#fff"/></svg>
<svg viewBox="0 0 16 16"><path d="M1 6h2.500L7 2.500v11L3.500 10H1zM9 6q1.500 2 0 4M11 4q3 4 0 8M13 2.500q4 5.500 0 11" fill="none" stroke="#fff"/></svg>
<button class="lang">英</button>
<svg class="sg" viewBox="0 0 30 30"><use href="#sogou"/></svg>
<div class="two clock">14:41<br>2017/6/7</div>
<button class="note" aria-label="4 条通知"><svg viewBox="0 0 26 26"><path d="M2 2h16v12H9l-3 3v-3H2z" fill="#fff"/><path d="M4.500 5.500h11M4.500 8h11M4.500 10.500h7" stroke="#000c10"/><circle cx="17" cy="17" r="8" fill="#3a4246" stroke="#8a9094"/><text x="17" y="21.500" text-anchor="middle" font-size="13" font-family="Noto Sans" fill="#fff">4</text></svg></button>
</div>
</div>

<div class="ime">
<svg class="logo"><use href="#sogou"/></svg>
<button>英</button>
<svg viewBox="0 0 16 16"><circle cx="4" cy="5" r="2"/><path d="M9 9.500q2-1.500 3 .5 0 3-3 4 2-2 0-4.500z"/></svg>
<svg viewBox="0 0 16 16"><rect x="5.500" y="1" width="5" height="9" rx="2.500"/><path d="M3 6.500q0 5 5 5t5-5M8 11.500V15M5 15h6" fill="none" stroke="#1e74c8" stroke-width="1.500"/></svg>
<svg viewBox="0 0 16 16"><path d="M0 3h16v10.500H0z"/><path d="M2 5.500h12M2 8h12" stroke="#fff" stroke-dasharray="1.500 1"/><path d="M4 11h8" stroke="#fff" stroke-width="1.300"/></svg>
<svg viewBox="0 0 16 16"><g fill="#b4bed8"><circle cx="6" cy="4" r="3"/><path d="M0 14q0-6 6-6t6 3v3z"/></g><path d="M8 9.500h3v5M13 9.500v5h2.500v-5H13" fill="none" stroke="#8e9abc"/></svg>
<svg viewBox="0 0 16 16"><path d="M5 1.500q3 3 6 0l5 3-2 3.500-1.500-.5V15h-9V7.500L2 8 0 4.500z"/></svg>
<svg viewBox="0 0 16 16"><path d="M15 4.500l-3 2.500-2.500-2L11.500 1Q8 .5 7 4v2.500L.8 12.600q-.5 2.500 2.500 2.400L9.500 9q5.500 1 5.500-4.500z"/></svg>
</div>

<div class="dialog sim" role="dialog" aria-labelledby="dlgTitle">
<div class="dhead"><svg class="i"><use href="#app"/></svg><h2 id="dlgTitle">梁后浇带侧面筋</h2><button aria-label="关闭"><svg viewBox="0 0 12 12"><path d="M1 1l10 10M11 1L1 11"/></svg></button></div>
<div class="dbody">
<div class="dgrid">
<table>
<thead><tr><th class="d1">梁宽<b>(</b>单位：<b>mm)</b></th><th class="hot">梁高<b>(</b>单位：<b>mm)</b></th><th>侧面纵筋</th></tr></thead>
<tbody><tr><td><b>50~500</b></td><td class="on"><b>50~500</b></td><td><b>2</b><svg class="r"><use href="#rebar"/></svg><b>12</b></td></tr></tbody>
</table>
</div>
<div class="row r1"><button>添加行</button><button>删除行</button></div>
<div class="memo">说明:</div>
<p class="tip">1.后浇带侧面筋可输入<em>2B12</em>、<em>2B12+2B14</em>、<em>B12@200</em> 三种格式。</p>
<div class="row r2"><button>确定</button><button>取消</button></div>
</div>
</div>
</body>
</html>
```
FILE: styles.css
```css
* { box-sizing: border-box; }
body {
  margin: 0;
  height: 100vh;
  display: flex;
  flex-direction: column;
  overflow: hidden;
  position: relative;
  background: #f0f0f0;
  color: #000;
  font: 12px/16px "Noto Sans", "Noto Sans CJK SC", sans-serif;
}
button, input, select { font: inherit; color: inherit; }
button { border: 0; padding: 0; background: none; white-space: nowrap; }
ul { list-style: none; margin: 0; padding: 0; }
h1, h2, p { margin: 0; font-size: 12px; font-weight: normal; }
svg { display: block; flex: none; }
.sprite { position: absolute; width: 0; height: 0; }
.i { width: 16px; height: 16px; }
.sim { font-family: "Liberation Sans", "Noto Sans CJK SC", sans-serif; }
.sim b { font: 10px/16px "DejaVu Sans Mono", monospace; }

/* title */
.titlebar { height: 23px; flex: none; display: flex; align-items: center; gap: 5px; padding: 0 19px 0 2px; background: #fff; color: #8c8c8c; }
.titlebar h1 { flex: 1; white-space: nowrap; overflow: hidden; font-family: Inter, "Noto Sans CJK SC", sans-serif; }
.winbtns { display: flex; gap: 34px; }
.winbtns svg, .dhead button svg { width: 12px; height: 12px; fill: none; stroke: #888; }
.ball {
  position: absolute; top: -26px; left: 1109px; width: 46px; height: 46px;
  border-radius: 50%; border: 1px solid #1d8a3c; box-shadow: 0 0 0 2px #dfe5e0, 0 1px 4px 2px #888;
  background: #44c863; color: #fff; text-align: center; padding-top: 24px; font-weight: 600;
}

/* bars */
.strip { display: flex; align-items: center; background: linear-gradient(#fafafa, #efefef); border-radius: 3px; }
.menubar { height: 30px; flex: none; display: flex; padding-top: 1px; }
.menus { display: flex; align-items: center; gap: 11px; padding: 0 6px 0 7px; }
.menus .close { margin-left: -7px; }
.menus .close .i { margin-right: -1px; }
.grow { flex: 1; margin-right: 2px; }
.account { width: 240px; gap: 12px; padding: 0 2px 0 4px; }
.more { margin-left: auto; align-self: flex-start; font-size: 14px; line-height: 14px; font-weight: 600; }
.toolbar { height: 30px; flex: none; display: flex; gap: 2px; padding: 1px 0 2px; }
.tb { display: flex; align-items: center; gap: 4px; }
.off { color: #777; }
.caret { border: 3px solid transparent; border-top-color: #000; border-bottom: 0; margin-left: 4px; }
.off .caret { border-top-color: #666; }
.caret.wide { margin: 0 2px 0 5px; }
.caret.tight { margin-left: -1px; }
.sep { width: 1px; height: 18px; background: #b8b8b8; }
.sep.dark { height: 24px; background: #8a8a8a; }
.g1 { width: 151px; gap: 6px; padding: 0 2px 0 4px; }
.g2 { width: 548px; gap: 7px; padding: 0 2px 0 4px; }
.g3 { flex: 1; gap: 7px; padding: 0 3px 0 2px; }
.g3 .tb { gap: 3px; }
.sigma { width: 16px; text-align: center; font: bold 14px/16px "Liberation Serif", serif; }
.boxed { border: 1px solid #777; height: 23px; padding: 0 3px 0 2px; margin-right: -4px; background: #f4f4f4; }
.edit { height: 29px; flex: none; gap: 6px; padding: 0 4px; }
.edit label { margin-left: -4px; }
.pick { display: flex; align-items: center; width: 64px; height: 23px; background: #fff; padding: 0 3px 0 4px; margin: 0 -2px; }
.pick select { appearance: none; border: 0; background: none; padding: 0; flex: 1; min-width: 0; }

/* main */
.main { flex: 1; min-height: 0; display: flex; gap: 6px; padding-bottom: 2px; }
.nav { width: 165px; flex: none; display: flex; flex-direction: column; }
.navhead { height: 16px; flex: none; display: flex; align-items: center; gap: 6px; border: 1px solid #777; border-left: 0; padding-right: 2px; margin-bottom: 2px; }
.navhead span { flex: 1; font-size: 13px; line-height: 14px; white-space: nowrap; }
.navhead svg { width: 12px; height: 12px; fill: none; stroke: #000; }
.navbtn { height: 22px; flex: none; border: 1px solid #fff; border-bottom-color: #8c8c8c; border-right-color: #a0a0a0; background: #efefef; text-align: center; }
.navtools { height: 27px; flex: none; display: flex; gap: 4px; padding: 4px 6px 0; background: linear-gradient(#fafafa, #efefef); border-left: 1px solid #a0a0a0; border-right: 1px solid #a0a0a0; }
.navtools svg { width: 18px; height: 16px; }
.treebox { flex: 1; min-height: 0; display: flex; margin: 0 1px 1px 2px; border: 1px solid #848890; padding: 1px 1px 2px 0; background: #fff; overflow: hidden; }
.tree { flex: 1; min-width: 0; overflow: hidden; }
.tree li { height: 16px; display: flex; align-items: center; white-space: nowrap; background-repeat: no-repeat; }
.dir { gap: 5px; padding-left: 7px; background-image: repeating-linear-gradient(90deg, #999 0 1px, transparent 1px 2px); background-size: 4px 1px; background-position: 20px 8px; }
.dir i, .croot i, .vscroll i { width: 7px; height: 7px; border: solid #404040; border-width: 0 2px 2px 0; transform: rotate(45deg) scale(.85); flex: none; }
.dir i { margin: -4px 3px 0 1px; }
.dir i.shut { border-color: #a0a0a0; transform: rotate(-45deg) scale(.85); margin: 0 4px 0 0; }
.leaf { padding-left: 40px;
  background-image: repeating-linear-gradient(#999 0 1px, transparent 1px 2px), repeating-linear-gradient(#999 0 1px, transparent 1px 2px), repeating-linear-gradient(90deg, #999 0 1px, transparent 1px 2px);
  background-size: 1px 16px, 1px 16px, 10px 1px; background-position: 12px 0, 31px 0, 32px 8px; }
.leaf.last { background-size: 1px 16px, 1px 9px, 10px 1px; }
.leaf span { display: flex; align-items: center; height: 16px; padding: 0 4px 0 2px; }
.leaf .i { margin-right: 5px; }
.leaf .sel { background: #d9d9d9; }
.vscroll { width: 16px; background: #f0f0f0; display: flex; flex-direction: column; align-items: center; padding: 3px 0 5px; }
.vscroll i { margin-bottom: 4px; }
.vscroll i.up { transform: rotate(225deg) scale(.85); margin: 4px 0 0; }
.track { flex: 1; align-self: stretch; padding: 117px 0 48px; margin: 1px 0 0; display: flex; }
.thumb { flex: 1; background: #cdcdcd; }

.work { flex: 1; min-width: 0; display: flex; flex-direction: column; }
.panes { flex: 1; min-height: 0; display: flex; gap: 4px; }
.comps { width: 183px; flex: none; display: flex; flex-direction: column; padding-top: 4px; }
.search { display: flex; height: 26px; background: #fff; align-items: center; gap: 5px; }
.search input { width: 157px; height: 25px; border: 1px solid #7a7a7a; padding: 0 2px 5px; margin-left: 1px; outline: 0; background: #fff; }
.search input::placeholder { color: #777; opacity: 1; }
.comptree { flex: 1; border: 1px solid #828790; background: #fff; padding: 1px 0 0 7px; }
.comptree li { height: 16px; display: flex; align-items: center; }
.croot i { margin: -4px 7px 0 1px; }
.croot .i { margin: 0 5px 0 1px; }
.cleaf { padding-left: 25px; background: repeating-linear-gradient(#999 0 1px, transparent 1px 2px) 24px 0/1px 9px no-repeat, repeating-linear-gradient(90deg, #999 0 1px, transparent 1px 2px) 25px 8px/8px 1px no-repeat; }
.cleaf span { display: flex; align-items: center; gap: 8px; height: 16px; background: #316ac5; margin-left: 8px; padding: 0 4px; }
.g { width: 11px; height: 11px; }

.props { flex: 1; min-width: 0; display: flex; flex-direction: column; background: #fff; border: 1px solid #dcdcdc; border-top: 0; margin-right: 4px; }
.tabs { height: 21px; flex: none; border-bottom: 1px solid #d9d9d9; background: #fdfdfd; display: flex; }
.tabs button { width: 63px; height: 21px; border: 1px solid #d9d9d9; border-width: 0 1px 0 0; background: #fff; }
.sheet { flex: 1; min-height: 0; display: flex; padding: 3px 16px 2px 3px; }
.gridbox { width: 416px; flex: none; border: 1px solid #a0a0a0; border-right: 0; overflow: hidden; background: #fff; }
table { border-collapse: collapse; table-layout: fixed; }
.grid { width: 369px; }
.c1 { width: 21px; } .c2 { width: 191px; } .c3 { width: 126px; } .c4 { width: 31px; }
th, td { font-weight: normal; padding: 0 2px; border: 1px solid #c0c0c0; text-align: left; white-space: nowrap; overflow: hidden; }
th { text-align: center; background: linear-gradient(#fff, #eee); }
.grid th { padding: 0; }
.grid thead th { height: 24px; border-top: 0; }
th.hot { background: linear-gradient(#fbd69c, #f1c060); color: #60003c; }
.grid tbody tr { height: 19px; }
.grid tr > :first-child { border-left: 0; }
.grid tbody td, .grid tbody th { height: 19px; line-height: 16px; }
.grid .n { padding-left: 20px; }
.blue, .grid .k { color: #00f; }
.grid .p { color: #808080; padding-left: 2px; }
.p button { width: 13px; height: 13px; border: 1px solid #b0b0b0; background: #fff; color: #000; font: 14px/11px "Liberation Sans", sans-serif; margin-right: 5px; vertical-align: 0; }
.grid .k { padding-left: 30px; background: linear-gradient(#b4b4b4, #b4b4b4) 8px 0/1px 100% no-repeat, linear-gradient(#b4b4b4, #b4b4b4) 9px 9px/16px 1px no-repeat; }
.grid .k.end { background-size: 1px 10px, 16px 1px; }
.cur th { background: #fbce87; color: #60003c; }
.grid .cur .k { background-color: #0078d7; color: #fff; }
.cur td { background: #d8e9f8; }
.grid td.chk { text-align: center; background: #fff; padding: 0; }
.chk input { appearance: none; display: block; width: 13px; height: 13px; border: 1px solid #333; background: #fff; margin: 0 auto; }
.r { display: inline-block; width: 12px; height: 12px; margin: 0 1px; vertical-align: -2px; }
.view { flex: 1; min-width: 0; border: 1px solid #555; background: #d5e1ef; padding: 30px 8px 9px 8px; box-shadow: inset 0 30px #b8c8d8; }
.view svg { width: 100%; height: 100%; }

/* status */
.status { height: 20px; margin: 0 1px 0 0; flex: none; display: flex; gap: 2px; white-space: nowrap; }
.status span { border: 1px solid #d6d6d6; padding: 1px 1px 0; background: linear-gradient(#fff, #f2f2f2); overflow: hidden; }
.s1 { width: 148px; } .s2 { width: 78px; } .s3 { width: 98px; } .s4 { width: 48px; } .s5 { flex: 1; } .s6 { width: 70px; }

/* taskbar */
.taskbar { height: 40px; flex: none; display: flex; background: #000c10; color: #fff; }
.start { width: 48px; display: grid; place-items: center; }
.start svg { width: 16px; height: 16px; }
.find { width: 342px; background: #333; display: flex; align-items: center; gap: 4px; padding: 0 11px 0 8px; }
.find svg { width: 24px; height: 24px; }
.find input { flex: 1; min-width: 0; background: none; border: 0; padding: 0; outline: 0; font-size: 14px; }
.find input::placeholder { color: #9a9a9a; opacity: 1; }
.find .mic { width: 16px; height: 20px; }
.apps { display: flex; gap: 1px; padding-left: 4px; }
.apps button { width: 48px; display: grid; place-items: center; }
.apps svg { width: 24px; height: 24px; }
.run { background: linear-gradient(#76b9ed, #76b9ed) 50% 100%/40px 2px no-repeat; }
.apps .act { background: linear-gradient(#76b9ed, #76b9ed) 50% 100%/48px 2px no-repeat #353d41; }
.grip { width: 23px; margin: 14px 0; background: linear-gradient(#444, #444) 9px 0/1px 100% no-repeat, linear-gradient(#444, #444) 12px 0/1px 100% no-repeat; }
.tray { margin-left: auto; display: flex; align-items: center; gap: 8px; border-right: 1px solid #666; margin-right: 4px; padding-right: 10px; }
.tray svg { width: 16px; height: 16px; }
.tray .bat { width: 18px; }
.two { text-align: center; line-height: 18px; }
.cpu { width: 70px; margin-right: -1px; }
.clock { width: 72px; margin: 0 4px; }
.lang { font-size: 13px; font-weight: 600; margin: 0 4px 0 0; }
.tray .note svg { width: 26px; height: 26px; }

/* floating windows */
.ime { position: absolute; left: 870px; top: 90px; width: 183px; height: 24px; display: flex; align-items: center; gap: 6px; padding: 0 3px 0 0; background: #fff; border: 1px solid #a8c4dc; color: #1e74c8; }
.ime svg { width: 16px; height: 16px; fill: #1e74c8; }
.ime .logo { width: 30px; height: 30px; margin: 0 0 0 -4px; }
.ime button { font-size: 15px; font-weight: 700; }
.dialog { position: absolute; left: 627px; top: 149px; width: 395px; background: #f0f0f0; border: 1px solid #3c92e4; box-shadow: 0 3px 12px rgba(0,0,0,.45); }
.dhead { height: 25px; display: flex; align-items: center; gap: 5px; padding: 0 9px 0 3px; background: #fff; }
.dhead h2 { flex: 1; }
.dhead button svg { stroke: #111; }
.dbody { padding: 8px 8px 10px; display: flex; flex-direction: column; }
.dgrid { height: 217px; border: 1px solid #a0a4aa; background: #fff; padding: 1px 0 0 1px; }
.dgrid table { width: 363px; }
.dgrid .d1 { width: 120px; }
.dgrid th { height: 23px; border-top: 0; }
.dgrid td { height: 23px; padding: 0 1px; }
.dgrid tr > :first-child { border-left: 0; }
.dgrid .on { background: #d8e9f8; }
.row { display: flex; justify-content: flex-end; padding-right: 28px; }
.row button { height: 24px; border: 1px solid #adadad; background: #e1e1e1; }
.r1 { gap: 50px; margin-top: 7px; }
.r1 button { width: 73px; }
.r2 { gap: 26px; margin-top: 7px; }
.r2 button { width: 65px; }
.memo { height: 11px; margin-top: 4px; line-height: 18px; }
.tip { height: 37px; line-height: 31px; margin: -1px 4px 0 13px; padding-left: 8px; border: 3px solid #f00; white-space: nowrap; background: #f0f0f0; }
.tip em { font: 11px/16px Roboto, sans-serif; }
```
